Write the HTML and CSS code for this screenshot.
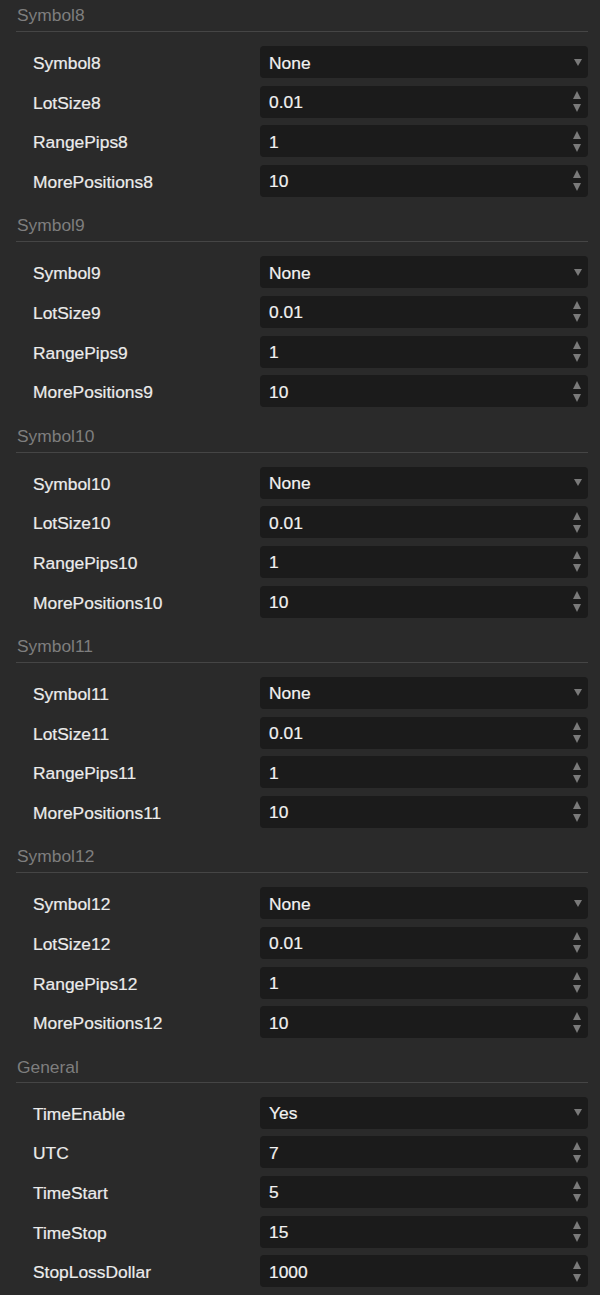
FILE: index.html
```html
<!DOCTYPE html>
<html>
<head>
<meta charset="utf-8">
<link rel="stylesheet" href="styles.css">
</head>
<body>
<div class="panel">
  <section class="sec">
    <div class="sec-title">Symbol8</div>
    <div class="rows">
      <div class="row"><div class="label">Symbol8</div><div class="field"><span class="val">None</span><span class="ico sel"></span></div></div>
      <div class="row"><div class="label">LotSize8</div><div class="field"><span class="val">0.01</span><span class="ico spin"></span></div></div>
      <div class="row"><div class="label">RangePips8</div><div class="field"><span class="val">1</span><span class="ico spin"></span></div></div>
      <div class="row"><div class="label">MorePositions8</div><div class="field"><span class="val">10</span><span class="ico spin"></span></div></div>
    </div>
  </section>
  <section class="sec">
    <div class="sec-title">Symbol9</div>
    <div class="rows">
      <div class="row"><div class="label">Symbol9</div><div class="field"><span class="val">None</span><span class="ico sel"></span></div></div>
      <div class="row"><div class="label">LotSize9</div><div class="field"><span class="val">0.01</span><span class="ico spin"></span></div></div>
      <div class="row"><div class="label">RangePips9</div><div class="field"><span class="val">1</span><span class="ico spin"></span></div></div>
      <div class="row"><div class="label">MorePositions9</div><div class="field"><span class="val">10</span><span class="ico spin"></span></div></div>
    </div>
  </section>
  <section class="sec">
    <div class="sec-title">Symbol10</div>
    <div class="rows">
      <div class="row"><div class="label">Symbol10</div><div class="field"><span class="val">None</span><span class="ico sel"></span></div></div>
      <div class="row"><div class="label">LotSize10</div><div class="field"><span class="val">0.01</span><span class="ico spin"></span></div></div>
      <div class="row"><div class="label">RangePips10</div><div class="field"><span class="val">1</span><span class="ico spin"></span></div></div>
      <div class="row"><div class="label">MorePositions10</div><div class="field"><span class="val">10</span><span class="ico spin"></span></div></div>
    </div>
  </section>
  <section class="sec">
    <div class="sec-title">Symbol11</div>
    <div class="rows">
      <div class="row"><div class="label">Symbol11</div><div class="field"><span class="val">None</span><span class="ico sel"></span></div></div>
      <div class="row"><div class="label">LotSize11</div><div class="field"><span class="val">0.01</span><span class="ico spin"></span></div></div>
      <div class="row"><div class="label">RangePips11</div><div class="field"><span class="val">1</span><span class="ico spin"></span></div></div>
      <div class="row"><div class="label">MorePositions11</div><div class="field"><span class="val">10</span><span class="ico spin"></span></div></div>
    </div>
  </section>
  <section class="sec">
    <div class="sec-title">Symbol12</div>
    <div class="rows">
      <div class="row"><div class="label">Symbol12</div><div class="field"><span class="val">None</span><span class="ico sel"></span></div></div>
      <div class="row"><div class="label">LotSize12</div><div class="field"><span class="val">0.01</span><span class="ico spin"></span></div></div>
      <div class="row"><div class="label">RangePips12</div><div class="field"><span class="val">1</span><span class="ico spin"></span></div></div>
      <div class="row"><div class="label">MorePositions12</div><div class="field"><span class="val">10</span><span class="ico spin"></span></div></div>
    </div>
  </section>
  <section class="sec">
    <div class="sec-title">General</div>
    <div class="rows">
      <div class="row"><div class="label">TimeEnable</div><div class="field"><span class="val">Yes</span><span class="ico sel"></span></div></div>
      <div class="row"><div class="label">UTC</div><div class="field"><span class="val">7</span><span class="ico spin"></span></div></div>
      <div class="row"><div class="label">TimeStart</div><div class="field"><span class="val">5</span><span class="ico spin"></span></div></div>
      <div class="row"><div class="label">TimeStop</div><div class="field"><span class="val">15</span><span class="ico spin"></span></div></div>
      <div class="row"><div class="label">StopLossDollar</div><div class="field"><span class="val">1000</span><span class="ico spin"></span></div></div>
    </div>
  </section>
</div>
</body>
</html>
```
FILE: styles.css
```css
html, body {
  margin: 0;
  padding: 0;
  background: #2a2a2a;
}
body {
  width: 600px;
  height: 1295px;
  overflow: hidden;
  font-family: "Liberation Sans", Arial, sans-serif;
  font-size: 17.4px;
}
.panel {
  display: flex;
  flex-direction: column;
}
.sec {
  height: 210.33px;
  display: flex;
  flex-direction: column;
}
.sec-title {
  height: 31px;
  line-height: 30px;
  margin: 0 12px 14px 16px;
  padding-left: 1px;
  border-bottom: 1px solid #454545;
  color: #7e7e7e;
}
.rows {
  display: flex;
  flex-direction: column;
  gap: 7.67px;
}
.row {
  display: flex;
  align-items: center;
  height: 32px;
}
.label {
  width: 227px;
  padding-left: 33px;
  color: #ececec;
  line-height: 32px;
  padding-top: 2px;
  -webkit-text-stroke: 0.2px #ececec;
}
.field {
  width: 328px;
  height: 32px;
  box-sizing: border-box;
  background: #1b1b1b;
  border-radius: 4px;
  display: flex;
  align-items: center;
  justify-content: space-between;
  padding: 0 6px 0 9px;
}
.val {
  color: #f2f2f2;
  padding-top: 2px;
  -webkit-text-stroke: 0.2px #f2f2f2;
}
.ico {
  display: block;
  width: 9px;
  position: relative;
}
.ico.sel {
  height: 0;
  border-left: 4.5px solid transparent;
  border-right: 4.5px solid transparent;
  border-top: 7px solid #7a7a7a;
  width: 0;
}
.ico.spin {
  height: 21px;
}
.ico.spin::before,
.ico.spin::after {
  content: "";
  position: absolute;
  left: 0;
  width: 0;
  height: 0;
  border-left: 4.5px solid transparent;
  border-right: 4.5px solid transparent;
}
.ico.spin::before {
  top: 0;
  border-bottom: 8px solid #7a7a7a;
}
.ico.spin::after {
  bottom: 0;
  border-top: 8px solid #7a7a7a;
}
```
